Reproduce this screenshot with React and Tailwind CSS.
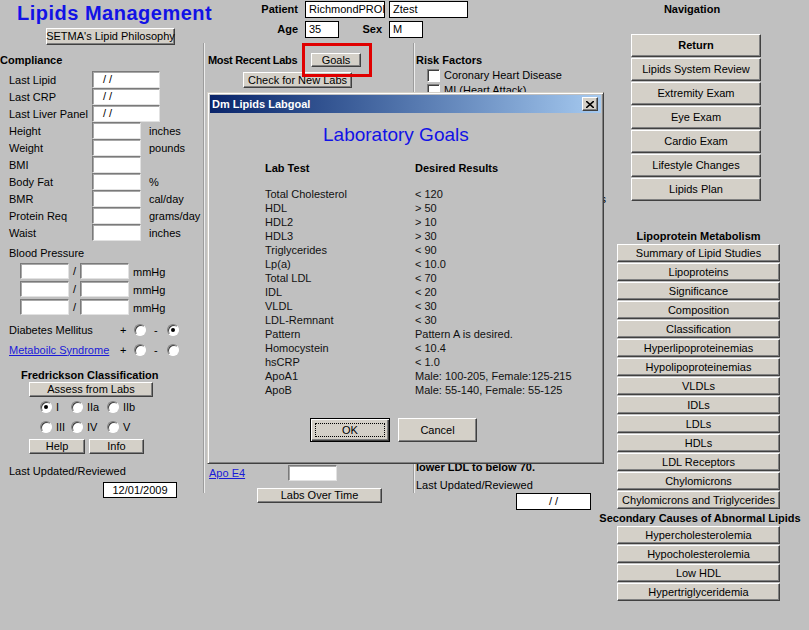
import React from 'react'

const FONT = "font-['Liberation_Sans',Arial,sans-serif]"

function Btn({ children, className = '' }) {
  return (
    <div
      className={`flex items-center justify-center bg-[#d4d0c8] border border-t-white border-l-white border-b-[#404040] border-r-[#404040] shadow-[inset_-1px_-1px_0_#808080] text-[11px] leading-none text-black whitespace-nowrap ${className}`}
    >
      {children}
    </div>
  )
}

function Field({ children, className = '' }) {
  return (
    <div
      className={`flex items-center bg-white border border-t-[#7a7a7a] border-l-[#7a7a7a] border-b-[#e2e2e2] border-r-[#e2e2e2] shadow-[inset_1px_1px_0_#a8a8a8] text-[11px] leading-none ${className}`}
    >
      {children}
    </div>
  )
}

function BoxField({ children, className = '' }) {
  return (
    <div className={`flex items-center bg-white border border-black text-[11px] leading-none whitespace-nowrap overflow-hidden ${className}`}>
      {children}
    </div>
  )
}

function Radio({ checked }) {
  return (
    <div className="w-[12px] h-[12px] shrink-0 rounded-full bg-white border border-t-[#808080] border-l-[#808080] border-b-white border-r-white shadow-[inset_1px_1px_0_#404040] flex items-center justify-center">
      {checked && <div className="w-[4px] h-[4px] rounded-full bg-black" />}
    </div>
  )
}

function Check() {
  return (
    <div className="w-[13px] h-[13px] shrink-0 bg-white border border-t-[#808080] border-l-[#808080] border-b-white border-r-white shadow-[inset_1px_1px_0_#404040]" />
  )
}

const dateRows = ['Last Lipid', 'Last CRP', 'Last Liver Panel']
const numRows = [
  ['Height', 'inches'],
  ['Weight', 'pounds'],
  ['BMI', ''],
  ['Body Fat', '%'],
  ['BMR', 'cal/day'],
  ['Protein Req', 'grams/day'],
  ['Waist', 'inches'],
]

const navButtons = ['Lipids System Review', 'Extremity Exam', 'Eye Exam', 'Cardio Exam', 'Lifestyle Changes', 'Lipids Plan']

const lipoButtons = [
  'Summary of Lipid Studies',
  'Lipoproteins',
  'Significance',
  'Composition',
  'Classification',
  'Hyperlipoproteinemias',
  'Hypolipoproteinemias',
  'VLDLs',
  'IDLs',
  'LDLs',
  'HDLs',
  'LDL Receptors',
  'Chylomicrons',
  'Chylomicrons and Triglycerides',
]

const secondaryButtons = ['Hypercholesterolemia', 'Hypocholesterolemia', 'Low HDL', 'Hypertriglyceridemia']

const goals = [
  ['Total Cholesterol', '< 120'],
  ['HDL', '> 50'],
  ['HDL2', '> 10'],
  ['HDL3', '> 30'],
  ['Triglycerides', '< 90'],
  ['Lp(a)', '< 10.0'],
  ['Total LDL', '< 70'],
  ['IDL', '< 20'],
  ['VLDL', '< 30'],
  ['LDL-Remnant', '< 30'],
  ['Pattern', 'Pattern A is desired.'],
  ['Homocystein', '< 10.4'],
  ['hsCRP', '< 1.0'],
  ['ApoA1', 'Male: 100-205, Female:125-215'],
  ['ApoB', 'Male: 55-140, Female: 55-125'],
]

function Separator() {
  return <div className="w-[2px] shrink-0 mt-[43px] h-[450px] border-l border-l-[#9c9c9c] border-r border-r-[#ececec]" />
}

function LeftColumn() {
  return (
    <div className="w-[203px] shrink-0 flex flex-col">
      <div className="h-[26px] pl-[17px] text-[20px] leading-[26px] font-bold tracking-[0.5px] text-[#1212e6] whitespace-nowrap">
        Lipids Management
      </div>
      <Btn className="mt-[2px] ml-[46px] w-[129px] h-[17px]">SETMA's Lipid Philosophy</Btn>

      <div className="mt-[7px] h-[16px] leading-[16px] font-bold">Compliance</div>

      <div className="mt-[3px] flex flex-col">
        {dateRows.map((l) => (
          <div key={l} className="flex items-center h-[17px]">
            <span className="w-[92px] pl-[9px] pt-[2px] whitespace-nowrap">{l}</span>
            <Field className="w-[68px] h-[17px] pl-[10px]">/ /</Field>
          </div>
        ))}
        {numRows.map(([l, u]) => (
          <div key={l} className="flex items-center h-[17px]">
            <span className="w-[92px] pl-[9px] pt-[2px] whitespace-nowrap">{l}</span>
            <Field className="w-[49px] h-[17px]" />
            <span className="ml-[8px] pt-[2px] whitespace-nowrap">{u}</span>
          </div>
        ))}
      </div>

      <div className="mt-[4px] h-[16px] leading-[16px] pl-[9px]">Blood Pressure</div>
      <div className="mt-[2px] flex flex-col gap-[2px]">
        {[0, 1, 2].map((i) => (
          <div key={i} className="flex items-center h-[16px] pl-[20px]">
            <Field className="w-[49px] h-[16px]" />
            <span className="w-[11px] text-center">/</span>
            <Field className="w-[49px] h-[16px]" />
            <span className="ml-[4px] pt-[2px]">mmHg</span>
          </div>
        ))}
      </div>

      <div className="mt-[7px] h-[16px] flex items-center pl-[9px]">
        <span className="w-[111px]">Diabetes Mellitus</span>
        <span className="w-[14px]">+</span>
        <Radio />
        <span className="w-[21px] pl-[8px]">-</span>
        <Radio checked />
      </div>
      <div className="mt-[4px] h-[16px] flex items-center pl-[9px]">
        <span className="w-[111px] text-[#1a1ad8] underline whitespace-nowrap">Metaboilc Syndrome</span>
        <span className="w-[14px]">+</span>
        <Radio />
        <span className="w-[21px] pl-[8px]">-</span>
        <Radio />
      </div>

      <div className="mt-[10px] h-[14px] leading-[14px] pl-[21px] font-bold whitespace-nowrap">Fredrickson Classification</div>
      <Btn className="ml-[29px] w-[124px] h-[15px]">Assess from Labs</Btn>

      <div className="mt-[4px] h-[12px] flex items-center pl-[40px]">
        <div className="w-[31px] flex items-center gap-[4px]"><Radio checked /><span>I</span></div>
        <div className="w-[36px] flex items-center gap-[4px]"><Radio /><span>IIa</span></div>
        <div className="flex items-center gap-[4px]"><Radio /><span>IIb</span></div>
      </div>
      <div className="mt-[8px] h-[12px] flex items-center pl-[40px]">
        <div className="w-[31px] flex items-center gap-[4px]"><Radio /><span>III</span></div>
        <div className="w-[36px] flex items-center gap-[4px]"><Radio /><span>IV</span></div>
        <div className="flex items-center gap-[4px]"><Radio /><span>V</span></div>
      </div>

      <div className="mt-[6px] flex">
        <Btn className="ml-[29px] w-[56px] h-[15px]">Help</Btn>
        <Btn className="ml-[4px] w-[55px] h-[15px]">Info</Btn>
      </div>

      <div className="mt-[10px] h-[14px] leading-[14px] pl-[9px] whitespace-nowrap">Last Updated/Reviewed</div>
      <BoxField className="mt-[4px] ml-[103px] w-[74px] h-[16px] justify-center">12/01/2009</BoxField>
    </div>
  )
}

function CenterArea() {
  return (
    <div className="w-[390px] shrink-0 flex flex-col">
      <div className="h-[43px] flex flex-col">
        <div className="mt-[1px] h-[17px] flex items-center">
          <span className="w-[93px] text-right font-bold">Patient</span>
          <BoxField className="ml-[7px] w-[80px] h-[17px] pl-[3px]">RichmondPROI</BoxField>
          <BoxField className="ml-[4px] w-[79px] h-[17px] pl-[3px]">Ztest</BoxField>
        </div>
        <div className="mt-[3px] h-[17px] flex items-center">
          <span className="w-[93px] text-right font-bold">Age</span>
          <BoxField className="ml-[7px] w-[34px] h-[17px] pl-[3px]">35</BoxField>
          <span className="w-[43px] text-right font-bold">Sex</span>
          <BoxField className="ml-[7px] w-[34px] h-[17px] pl-[3px]">M</BoxField>
        </div>
      </div>

      <div className="flex">
        {/* most recent labs */}
        <div className="w-[208px] shrink-0 flex flex-col">
          <div className="mt-[10px] h-[14px] flex items-center">
            <span className="w-[106px] pl-[3px] font-bold whitespace-nowrap tracking-[-0.3px]">Most Recent Labs</span>
            <Btn className="w-[50px] h-[14px]">Goals</Btn>
          </div>
          <Btn className="mt-[5px] ml-[38px] w-[109px] h-[16px]">Check for New Labs</Btn>
          <div className="mt-[377px] h-[16px] flex items-center">
            <span className="w-[83px] pl-[4px] text-[#1a1ad8] underline">Apo E4</span>
            <Field className="w-[49px] h-[16px]" />
          </div>
          <Btn className="mt-[7px] ml-[52px] w-[125px] h-[15px]">Labs Over Time</Btn>
        </div>

        <div className="w-[2px] shrink-0 h-[450px] border-l border-l-[#9c9c9c] border-r border-r-[#ececec]" />

        {/* risk factors */}
        <div className="w-[180px] shrink-0 flex flex-col">
          <div className="mt-[10px] h-[14px] leading-[14px] pl-[1px] font-bold">Risk Factors</div>
          <div className="mt-[2px] h-[13px] flex items-center pl-[12px]">
            <Check />
            <span className="ml-[4px] whitespace-nowrap">Coronary Heart Disease</span>
          </div>
          <div className="mt-[2px] h-[13px] flex items-center pl-[12px]">
            <Check />
            <span className="ml-[4px] whitespace-nowrap">MI (Heart Attack)</span>
          </div>
          <div className="mt-[95px] h-[14px] leading-[14px] w-[191px] text-right whitespace-nowrap">Smoking Habits</div>
          <div className="mt-[254px] h-[14px] leading-[14px] pl-[1px] font-bold whitespace-nowrap">lower LDL to below 70.</div>
          <div className="mt-[4px] h-[14px] leading-[14px] pl-[1px] whitespace-nowrap">Last Updated/Reviewed</div>
          <BoxField className="mt-[1px] ml-[101px] w-[75px] h-[17px] justify-center">/ /</BoxField>
        </div>
      </div>
    </div>
  )
}

function RightColumn() {
  return (
    <div className="w-[214px] shrink-0 flex flex-col">
      <div className="mt-[2px] ml-[36px] w-[122px] h-[14px] leading-[14px] text-center font-bold">Navigation</div>
      <div className="mt-[18px] ml-[36px] flex flex-col gap-[1px]">
        <Btn className="w-[130px] h-[23px] font-bold">Return</Btn>
        {navButtons.map((b) => (
          <Btn key={b} className="w-[130px] h-[23px]">{b}</Btn>
        ))}
      </div>

      <div className="mt-[28px] ml-[22px] w-[163px] h-[14px] leading-[14px] text-center font-bold whitespace-nowrap">Lipoprotein Metabolism</div>
      <div className="mt-[1px] ml-[22px] flex flex-col gap-[1px]">
        {lipoButtons.map((b) => (
          <Btn key={b} className="w-[163px] h-[18px]">{b}</Btn>
        ))}
      </div>

      <div className="mt-[2px] w-[210px] h-[14px] leading-[14px] text-center font-bold whitespace-nowrap">Secondary Causes of Abnormal Lipids</div>
      <div className="mt-[1px] ml-[22px] flex flex-col gap-[1px]">
        {secondaryButtons.map((b) => (
          <Btn key={b} className="w-[163px] h-[18px]">{b}</Btn>
        ))}
      </div>
    </div>
  )
}

function GoalsDialog() {
  return (
    <div className="absolute left-[207px] top-[92px] w-[397px] h-[372px] bg-[#c0c0c0] border border-t-[#d4d0c8] border-l-[#d4d0c8] border-r-[#404040] border-b-[#404040] shadow-[inset_1px_1px_0_#ffffff,inset_-1px_-1px_0_#808080] p-[2px] flex flex-col">
      <div className="h-[18px] shrink-0 flex items-center justify-between bg-gradient-to-r from-[#0a246a] to-[#a6caf0]">
        <span className="pl-[2px] text-white font-bold text-[11px]">Dm Lipids Labgoal</span>
        <div className="mr-[3px] w-[16px] h-[14px] bg-[#d4d0c8] border border-t-white border-l-white border-b-[#404040] border-r-[#404040] shadow-[inset_-1px_-1px_0_#808080] flex items-center justify-center">
          <svg width="8" height="7" viewBox="0 0 8 7">
            <path d="M0 0 L8 7 M8 0 L0 7" stroke="#000" strokeWidth="1.6" />
          </svg>
        </div>
      </div>

      <div className="mt-[10px] h-[24px] leading-[24px] pl-[113px] text-[19px] text-[#1212e6] whitespace-nowrap">Laboratory Goals</div>

      <div className="mt-[14px] h-[14px] leading-[14px] flex font-bold pl-[55px]">
        <span className="w-[150px]">Lab Test</span>
        <span>Desired Results</span>
      </div>

      <div className="mt-[12px] flex flex-col pl-[55px]">
        {goals.map(([t, r]) => (
          <div key={t} className="h-[14px] leading-[14px] flex text-[#111]">
            <span className="w-[150px] whitespace-nowrap">{t}</span>
            <span className="whitespace-nowrap">{r}</span>
          </div>
        ))}
      </div>

      <div className="mt-[21px] flex pl-[100px]">
        <div className="relative w-[80px] h-[24px] border border-black bg-[#d4d0c8] shadow-[inset_1px_1px_0_#ffffff,inset_-1px_-1px_0_#404040,inset_-2px_-2px_0_#808080] flex items-center justify-center text-[11px]">
          <div className="absolute inset-[4px] border border-dotted border-black" />
          OK
        </div>
        <Btn className="ml-[8px] w-[79px] h-[24px]">Cancel</Btn>
      </div>
    </div>
  )
}

export default function App() {
  return (
    <div className={`relative w-[809px] h-[630px] overflow-hidden bg-[#c0c0c0] flex text-[11px] text-black ${FONT}`}>
      <LeftColumn />
      <Separator />
      <CenterArea />
      <RightColumn />

      <GoalsDialog />

      {/* highlight round the Goals button */}
      <div className="absolute left-[302px] top-[43px] w-[70px] h-[34px] border-[3px] border-[#e00000]" />
    </div>
  )
}
